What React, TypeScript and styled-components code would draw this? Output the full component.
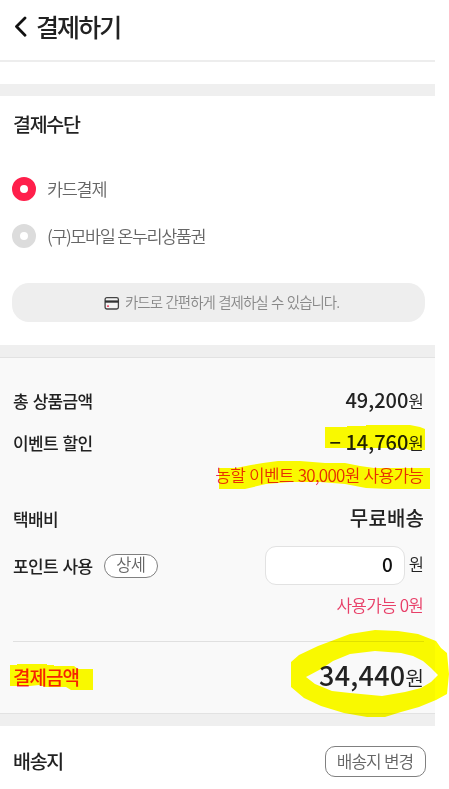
import React from 'react';
import styled, { createGlobalStyle } from 'styled-components';

const GlobalStyle = createGlobalStyle`
  *, *::before, *::after { box-sizing: border-box; }
  body { margin: 0; background: #fff; overflow: hidden; }
`;

const Page = styled.main`
  position: relative;
  width: 449px;
  height: 789px;
  background: #fff;
  font-family: 'Noto Sans CJK KR', 'Noto Sans', sans-serif;
  color: #222;
  overflow: hidden;
`;

const Content = styled.div`
  width: 435px;
  display: flex;
  flex-direction: column;
`;

const Header = styled.header`
  height: 62px;
  display: flex;
  align-items: center;
  margin-bottom: 22px;
  padding: 0 0 8px 14px;
  border-bottom: 2px solid #ededed;
  gap: 8px;
`;

const Text = styled.span<{
  $size: number;
  $weight?: number;
  $track?: number;
  $word?: number;
  $color?: string;
}>`
  display: inline-block;
  font-size: ${(p) => p.$size}px;
  font-weight: ${(p) => p.$weight ?? 400};
  letter-spacing: ${(p) => p.$track ?? 0}px;
  word-spacing: ${(p) => p.$word ?? 0}px;
  margin-right: ${(p) => -(p.$track ?? 0)}px;
  color: ${(p) => p.$color ?? '#222'};
  line-height: 1;
  white-space: pre;
`;

const Band = styled.div`
  height: 12px;
  background: #efefef;
`;

const Payment = styled.section`
  display: flex;
  flex-direction: column;
  height: 249px;
  padding: 15px 10px 0 12px;
`;

const SectionTitle = styled.h2`
  margin: 0 0 0 1px;
  height: 26px;
  display: flex;
  align-items: center;
`;

const Options = styled.div`
  display: flex;
  flex-direction: column;
  gap: 23px;
  margin-top: 40px;
`;

const Option = styled.label`
  display: flex;
  align-items: center;
  height: 24px;
  gap: 11px;
`;

const Radio = styled.i<{ $on?: boolean }>`
  width: 24px;
  height: 24px;
  border-radius: 50%;
  border: 8px solid ${(p) => (p.$on ? '#ff1f4b' : '#dcdcdc')};
  background: #fff;
`;

const Notice = styled.div`
  display: flex;
  align-items: center;
  margin-top: 35px;
  height: 39px;
  padding-left: 92px;
  gap: 5px;
  border-radius: 17px;
  background: #eee;
`;

const Summary = styled.section`
  height: 357px;
  padding: 22px 11px 0 13px;
  background: #f9f9f9;
  border-top: 1px solid #e2e2e2;
  border-bottom: 1px solid #e2e2e2;
`;

const Row = styled.div<{ $h: number; $end?: boolean; $lift?: number }>`
  display: flex;
  align-items: center;
  justify-content: ${(p) => (p.$end ? 'flex-end' : 'space-between')};
  height: ${(p) => p.$h}px;
  padding-bottom: ${(p) => p.$lift ?? 0}px;
`;

const Group = styled.div<{ $gap?: number; $baseline?: boolean; $lift?: number }>`
  display: flex;
  align-items: ${(p) => (p.$baseline ? 'baseline' : 'center')};
  gap: ${(p) => p.$gap ?? 0}px;
  padding-bottom: ${(p) => p.$lift ?? 0}px;
`;

const Divider = styled.hr`
  margin: 0;
  border: 0;
  height: 1px;
  background: #e0e0e0;
`;

const OutlineButton = styled.button<{ $w: number; $h: number; $r: number }>`
  display: flex;
  align-items: center;
  justify-content: center;
  width: ${(p) => p.$w}px;
  height: ${(p) => p.$h}px;
  padding: 0 0 2px;
  border: 1px solid #808080;
  border-radius: ${(p) => p.$r}px;
  background: #fff;
  font-family: inherit;
`;

const PointField = styled.div`
  display: flex;
  align-items: center;
  justify-content: flex-end;
  width: 140px;
  height: 39px;
  padding: 0 11px 4px 0;
  border: 1px solid #e2e2e2;
  border-radius: 11px;
  background: #fff;
`;

const Shipping = styled.section`
  display: flex;
  align-items: center;
  justify-content: space-between;
  height: 63px;
  padding: 7px 9px 0 13px;
`;

const Highlighter = styled.svg`
  position: absolute;
  inset: 0;
  mix-blend-mode: multiply;
  pointer-events: none;
`;

const Label = ({ children }: { children: string }) => (
  <Text $size={17} $weight={500} $track={-0.7} $word={1.6}>{children}</Text>
);

const Won = ({ size = 17 }: { size?: number }) => (
  <Text $size={size} $weight={350}>원</Text>
);

export default function App() {
  return (
    <Page>
      <GlobalStyle />
      <Content>
        <Header>
          <svg width="14" height="22" viewBox="0 0 14 22" fill="none">
            <path d="M11 3 L2.5 11.6 L11 20.2" stroke="#111" strokeWidth="2.8" strokeLinecap="round" strokeLinejoin="round" />
          </svg>
          <Text $size={25} $weight={500} $track={-1.9}>결제하기</Text>
        </Header>
        <Band />
        <Payment>
          <SectionTitle>
            <Text $size={19.5} $weight={500} $track={-1.3}>결제수단</Text>
          </SectionTitle>
          <Options>
            <Option>
              <Radio $on />
              <Text $size={17.5} $weight={350} $track={-1.3} $color="#666">카드결제</Text>
            </Option>
            <Option>
              <Radio />
              <Text $size={17.5} $weight={350} $track={-1.45} $word={0.5} $color="#666">(구)모바일 온누리상품권</Text>
            </Option>
          </Options>
          <Notice>
            <svg width="16" height="14" viewBox="0 0 16 14">
              <rect x="1.1" y="1.6" width="13.3" height="11.4" rx="1.8" fill="#f3f3f3" stroke="#444" strokeWidth="1.3" />
              <rect x="1" y="4.4" width="13.5" height="2.3" fill="#333" />
              <rect x="3" y="9.3" width="2" height="1.7" fill="#f0506e" />
            </svg>
            <Text $size={14.5} $weight={350} $track={-1} $word={1.2} $color="#888">카드로 간편하게 결제하실 수 있습니다.</Text>
          </Notice>
        </Payment>
        <Band />
        <Summary>
          <Row $h={41}>
            <Label>총 상품금액</Label>
            <Group $baseline $lift={1}>
              <Text $size={20} $weight={500}>49,200</Text>
              <Won />
            </Group>
          </Row>
          <Row $h={42}>
            <Label>이벤트 할인</Label>
            <Group $baseline>
              <Text $size={20} $weight={500}>− 14,760</Text>
              <Won />
            </Group>
          </Row>
          <Row $h={24} $end $lift={2}>
            <Text $size={17} $weight={350} $track={-0.7} $word={0.8} $color="#e82f5c">농할 이벤트 30,000원 사용가능</Text>
          </Row>
          <Row $h={62}>
            <Label>택배비</Label>
            <Text $size={20} $weight={500} $track={0.2}>무료배송</Text>
          </Row>
          <Row $h={33}>
            <Group $gap={11}>
              <Label>포인트 사용</Label>
              <OutlineButton $w={54} $h={24} $r={12}>
                <Text $size={16.5} $weight={350} $track={-0.6} $color="#666">상세</Text>
              </OutlineButton>
            </Group>
            <Group $gap={4}>
              <PointField><Text $size={19} $weight={500} $color="#111">0</Text></PointField>
              <Group $lift={3}><Won size={16.5} /></Group>
            </Group>
          </Row>
          <Row $h={46} $end $lift={2}>
            <Text $size={17} $weight={350} $track={-0.7} $word={0.5} $color="#e83f68">사용가능 0원</Text>
          </Row>
          <Row $h={13} />
          <Divider />
          <Row $h={68}>
            <Text $size={19} $weight={500} $track={-1} $color="#f52350">결제금액</Text>
            <Group $baseline $lift={3}>
              <Text $size={27} $weight={500} $track={0.2}>34,440</Text>
              <Won size={20.5} />
            </Group>
          </Row>
        </Summary>
        <Band />
        <Shipping>
          <Text $size={19.5} $weight={500} $track={-1.3}>배송지</Text>
          <OutlineButton $w={101} $h={31} $r={10}>
            <Text $size={17} $weight={350} $track={-1} $word={0.5} $color="#666">배송지 변경</Text>
          </OutlineButton>
        </Shipping>
      </Content>
      <Highlighter width="449" height="789" viewBox="0 0 449 789" fill="#ffff00">
        <path d="M325 427 H347 V426 H366 V425 H410 L420 427 L425 429 V450 H409 L405 448 H325 Z" />
        <path d="M219 468 H236 L251 465 L263 463 L278 461 H300 L325 463 H345 L360 466 L374 468 H430 V489 H390 L366 488 L345 484 L320 482 H290 L266 484 L245 489 H219 Z" />
        <path d="M10 665 H17 V664 H47 V665 H54 V666 H74 L78 669 H93 V690 H71 L66 687 L46 687 L39 685 L30 686 H10 Z" />
        <path fillRule="evenodd" d="M291 662 L299 655 L318 646 L350 634 L375 630 L398 631 L418 634 L436 641 L441 648 L447 653 L449 674 L447 694 L436 700 L419 707 L401 712 L385 717 L367 717 L344 713 L321 706 L304 698 L291 687 Z M306 677 L321 669 L333 661 L350 654 L375 651 L401 653 L413 656 L423 661 L431 668 L438 675 L431 682 L421 688 L405 692 L382 696 L350 693 L332 691 L315 684 Z" />
      </Highlighter>
    </Page>
  );
}
